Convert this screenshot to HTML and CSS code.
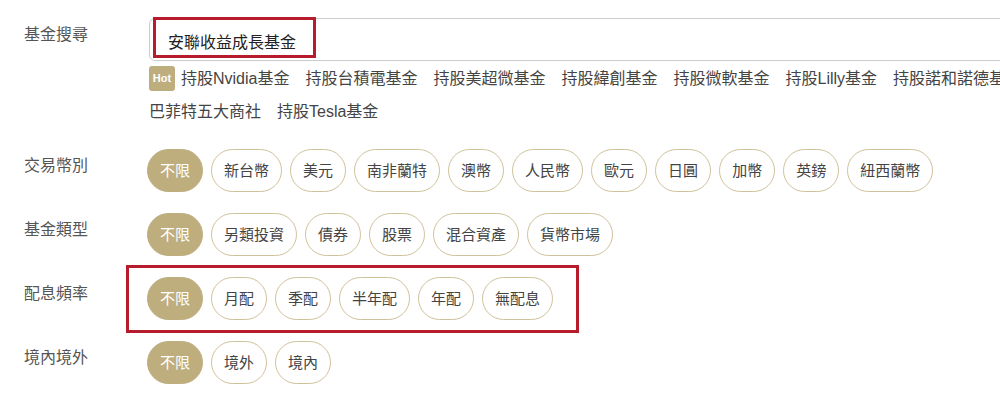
FILE: index.html
```html
<!DOCTYPE html>
<html lang="zh-Hant">
<head>
  <meta charset="UTF-8">
  <meta name="viewport" content="width=device-width, initial-scale=1.0">
  <title>基金篩選</title>
  <link rel="stylesheet" href="styles.css">
</head>
<body>
  <div class="page">
    <div class="row search-row">
      <div class="row-label">基金搜尋</div>
      <div class="row-body">
        <div class="search-box">
          <span class="search-text">安聯收益成長基金</span>
          <span class="mark mark-search"></span>
        </div>
        <div class="hot-list">
          <span class="hot-badge">Hot</span>
          <a class="hot-item">持股Nvidia基金</a>
          <a class="hot-item">持股台積電基金</a>
          <a class="hot-item">持股美超微基金</a>
          <a class="hot-item">持股緯創基金</a>
          <a class="hot-item">持股微軟基金</a>
          <a class="hot-item">持股Lilly基金</a>
          <a class="hot-item">持股諾和諾德基金</a>
          <a class="hot-item">巴菲特五大商社</a>
          <a class="hot-item">持股Tesla基金</a>
        </div>
      </div>
    </div>

    <div class="row">
      <div class="row-label">交易幣別</div>
      <div class="pills">
        <span class="pill active">不限</span>
        <span class="pill">新台幣</span>
        <span class="pill">美元</span>
        <span class="pill">南非蘭特</span>
        <span class="pill">澳幣</span>
        <span class="pill">人民幣</span>
        <span class="pill">歐元</span>
        <span class="pill">日圓</span>
        <span class="pill">加幣</span>
        <span class="pill">英鎊</span>
        <span class="pill">紐西蘭幣</span>
      </div>
    </div>

    <div class="row">
      <div class="row-label">基金類型</div>
      <div class="pills">
        <span class="pill active">不限</span>
        <span class="pill">另類投資</span>
        <span class="pill">債券</span>
        <span class="pill">股票</span>
        <span class="pill">混合資產</span>
        <span class="pill">貨幣市場</span>
      </div>
    </div>

    <div class="row">
      <div class="row-label">配息頻率</div>
      <div class="pills marked">
        <span class="pill active">不限</span>
        <span class="pill">月配</span>
        <span class="pill">季配</span>
        <span class="pill">半年配</span>
        <span class="pill">年配</span>
        <span class="pill">無配息</span>
      </div>
    </div>

    <div class="row">
      <div class="row-label">境內境外</div>
      <div class="pills">
        <span class="pill active">不限</span>
        <span class="pill">境外</span>
        <span class="pill">境內</span>
      </div>
    </div>
  </div>
</body>
</html>
```

FILE: styles.css
```css
html, body {
  margin: 0;
  overflow: hidden;
  background-color: #fff;
}
body {
  font-family: "Liberation Sans", "Noto Sans CJK TC", sans-serif;
  color: #444;
}
.page {
  width: 1060px;
  padding: 17px 0 0 24px;
}
.row {
  display: flex;
  align-items: flex-start;
  margin-bottom: 21px;
}
.row-label {
  width: 124px;
  flex-shrink: 0;
  padding-top: 5px;
  font-size: 16px;
  line-height: 24px;
  color: #555;
}
.search-row .row-label { padding-top: 6px; }
.row-body { flex: 1; margin-left: 1px; }

.search-box {
  position: relative;
  height: 41px;
  border: 1px solid #ccc;
  border-radius: 6px;
  margin-top: 1px;
  padding-left: 18px;
  display: flex;
  align-items: center;
  font-size: 16px;
  color: #222;
}
.search-text { padding-top: 3px; }
.mark {
  position: absolute;
  border: 3px solid #b71c2c;
  box-sizing: border-box;
  pointer-events: none;
}
.mark-search {
  left: 3px;
  top: -2px;
  width: 163px;
  height: 41px;
}

.hot-list {
  display: flex;
  flex-wrap: wrap;
  align-items: center;
  column-gap: 16px;
  margin-top: 1px;
  font-size: 16px;
  line-height: 33px;
}
.hot-badge {
  width: 26px;
  height: 25px;
  margin-right: -10px;
  border-radius: 3px;
  background-color: #bead7d;
  color: #fff;
  font-size: 11px;
  font-weight: bold;
  line-height: 25px;
  text-align: center;
}
.hot-item { color: #444; cursor: pointer; }

.pills {
  display: flex;
  flex-wrap: wrap;
  gap: 8px;
  margin-left: -1px;
}
.pill {
  height: 43px;
  box-sizing: border-box;
  padding: 0 12px;
  border: 1px solid #cfc29a;
  border-radius: 22px;
  background-color: #fff;
  font-size: 15px;
  line-height: 41px;
  color: #444;
  cursor: pointer;
}
.pill.active {
  background-color: #bead7d;
  border-color: #bead7d;
  color: #fff;
}
.pills.marked { position: relative; }
.pills.marked::after {
  content: "";
  position: absolute;
  left: -21px;
  right: -26px;
  top: -12px;
  bottom: -13px;
  border: 3px solid #b71c2c;
  pointer-events: none;
}
```
